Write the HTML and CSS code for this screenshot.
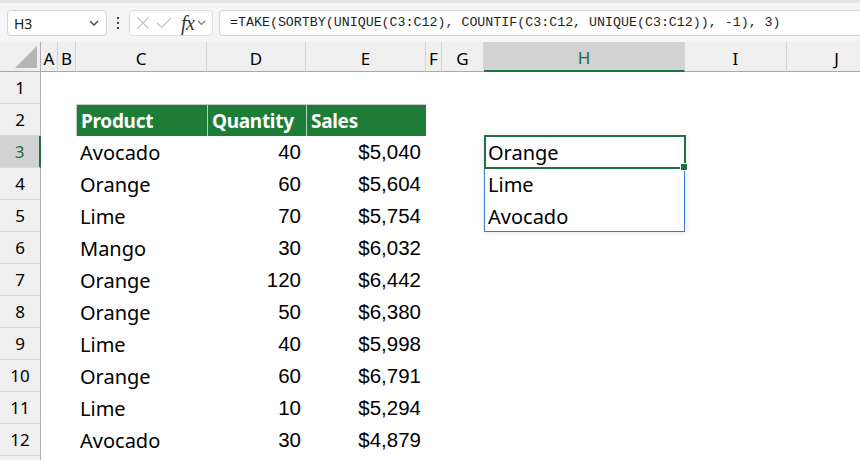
FILE: index.html
```html
<!DOCTYPE html>
<html>
<head>
<meta charset="utf-8">
<link rel="stylesheet" href="styles.css">
</head>
<body>
<div class="toolbar">
  <div class="namebox"><span>H3</span>
    <svg class="chev" width="10" height="6" viewBox="0 0 10 6"><path d="M1 1 L5 5 L9 1" fill="none" stroke="#444" stroke-width="1.3"/></svg>
  </div>
  <div class="dots"><i></i><i></i><i></i></div>
  <div class="fxbox">
    <svg width="14" height="14" viewBox="0 0 14 14"><path d="M1 1 L13 13 M13 1 L1 13" stroke="#c4c4c4" stroke-width="1.2" fill="none"/></svg>
    <svg width="16" height="12" viewBox="0 0 16 12"><path d="M1 6 L5.5 10.5 L15 1" stroke="#c4c4c4" stroke-width="1.2" fill="none"/></svg>
    <span class="fx">fx</span>
    <svg width="9" height="6" viewBox="0 0 9 6"><path d="M1 1 L4.5 4.5 L8 1" fill="none" stroke="#777" stroke-width="1.1"/></svg>
  </div>
  <div class="formula">=TAKE(SORTBY(UNIQUE(C3:C12), COUNTIF(C3:C12, UNIQUE(C3:C12)), -1), 3)</div>
</div>

<div class="sheet">
  <div class="ch corner"><svg width="22" height="22" viewBox="0 0 22 22"><path d="M22 0 L22 22 L0 22 Z" fill="#b5b5b5"/></svg></div>
  <div class="ch">A</div><div class="ch">B</div><div class="ch">C</div><div class="ch">D</div><div class="ch">E</div><div class="ch">F</div><div class="ch">G</div><div class="ch sel">H</div><div class="ch">I</div><div class="ch">J</div>

  <div class="rh">1</div><div></div><div></div><div></div><div></div><div></div><div></div><div></div><div></div><div></div><div></div>

  <div class="rh">2</div><div></div><div></div><div class="th first">Product</div><div class="th">Quantity</div><div class="th">Sales</div><div></div><div></div><div></div><div></div><div></div>

  <div class="rh rsel">3</div><div></div><div></div><div class="c">Avocado</div><div class="n">40</div><div class="n">$5,040</div><div></div><div></div><div class="c">Orange</div><div></div><div></div>
  <div class="rh">4</div><div></div><div></div><div class="c">Orange</div><div class="n">60</div><div class="n">$5,604</div><div></div><div></div><div class="c">Lime</div><div></div><div></div>
  <div class="rh">5</div><div></div><div></div><div class="c">Lime</div><div class="n">70</div><div class="n">$5,754</div><div></div><div></div><div class="c">Avocado</div><div></div><div></div>
  <div class="rh">6</div><div></div><div></div><div class="c">Mango</div><div class="n">30</div><div class="n">$6,032</div><div></div><div></div><div></div><div></div><div></div>
  <div class="rh">7</div><div></div><div></div><div class="c">Orange</div><div class="n">120</div><div class="n">$6,442</div><div></div><div></div><div></div><div></div><div></div>
  <div class="rh">8</div><div></div><div></div><div class="c">Orange</div><div class="n">50</div><div class="n">$6,380</div><div></div><div></div><div></div><div></div><div></div>
  <div class="rh">9</div><div></div><div></div><div class="c">Lime</div><div class="n">40</div><div class="n">$5,998</div><div></div><div></div><div></div><div></div><div></div>
  <div class="rh">10</div><div></div><div></div><div class="c">Orange</div><div class="n">60</div><div class="n">$6,791</div><div></div><div></div><div></div><div></div><div></div>
  <div class="rh">11</div><div></div><div></div><div class="c">Lime</div><div class="n">10</div><div class="n">$5,294</div><div></div><div></div><div></div><div></div><div></div>
  <div class="rh">12</div><div></div><div></div><div class="c">Avocado</div><div class="n">30</div><div class="n">$4,879</div><div></div><div></div><div></div><div></div><div></div>
  <div class="rh"></div>

  <div class="spill"></div>
  <div class="active"><span class="handle"></span></div>
</div>
</body>
</html>
```

FILE: styles.css
```css
html, body {
  margin: 0;
  padding: 0;
  width: 860px;
  height: 460px;
  overflow: hidden;
  background: #fff;
  font-family: "Noto Sans", "Liberation Sans", sans-serif;
}

.toolbar {
  height: 42px;
  box-sizing: border-box;
  background: #f5f5f5;
  border-top: 3px solid #e4e4e4;
  display: flex;
  align-items: center;
  padding-left: 7px;
  padding-top: 1px;
}

.namebox {
  width: 100px;
  height: 26px;
  box-sizing: border-box;
  background: #fff;
  border: 1px solid #d4d4d4;
  border-radius: 4px;
  display: flex;
  align-items: center;
  justify-content: space-between;
  padding: 0 7px 0 6px;
  font-size: 14px;
  color: #222;
}

.dots {
  width: 22px;
  display: flex;
  flex-direction: column;
  align-items: center;
  gap: 3px;
}
.dots i {
  width: 2px;
  height: 2px;
  background: #444;
  display: block;
}

.fxbox {
  width: 84px;
  height: 26px;
  box-sizing: border-box;
  background: #fff;
  border: 1px solid #dcdcdc;
  border-radius: 4px;
  display: flex;
  align-items: center;
  padding: 0 4px 0 6px;
  gap: 6px;
}
.fx {
  font-family: "Liberation Serif", serif;
  font-style: italic;
  font-size: 20px;
  color: #333;
  margin-left: 3px;
  margin-right: -3px;
  line-height: 1;
  letter-spacing: -0.5px;
}

.formula {
  margin-left: 6px;
  flex: 1;
  height: 26px;
  box-sizing: border-box;
  background: #fff;
  border: 1px solid #d4d4d4;
  border-right: none;
  border-radius: 4px 0 0 4px;
  padding-left: 10px;
  font-family: "Liberation Mono", monospace;
  font-size: 13.3px;
  line-height: 24px;
  color: #1f1f1f;
  white-space: nowrap;
}

.sheet {
  position: relative;
  display: grid;
  grid-template-columns: 41px 17px 18px 131px 99px 120px 16px 42px 201px 102px 100px;
  grid-template-rows: 30px repeat(13, 32px);
  color: #000;
}

.ch {
  background: #efefef;
  border-right: 1px solid #d4d4d4;
  border-bottom: 1px solid #a8a8a8;
  box-sizing: border-box;
  display: flex;
  align-items: center;
  justify-content: center;
  font-size: 17px;
  padding-top: 3px;
}
.ch.corner {
  justify-content: flex-end;
  align-items: flex-end;
  padding: 0 3px 3px 0;
  border-right: 1px solid #b0b0b0;
}
.ch.sel {
  background: #d2d2d2;
  color: #1c6b3e;
  border-bottom: 2px solid #1e7145;
}

.rh {
  grid-column: 1;
  background: #efefef;
  border-right: 1px solid #b0b0b0;
  border-bottom: 1px solid #d8d8d8;
  box-sizing: border-box;
  display: flex;
  align-items: center;
  justify-content: center;
  font-size: 17px;
}
.rh.rsel {
  background: #d2d2d2;
  color: #1c6b3e;
  border-right: 2px solid #1e7145;
}

.th {
  background: #1d7d36;
  color: #fff;
  font-weight: bold;
  font-size: 19px;
  letter-spacing: -0.3px;
  display: flex;
  align-items: center;
  padding-left: 4px;
  border-top: 1px solid #c8c8c8;
  border-left: 1px solid #b9cfbf;
  box-sizing: border-box;
}
.th.first {
  border-left: 1px solid #c8c8c8;
}

.c, .n {
  display: flex;
  align-items: center;
  font-size: 20px;
  white-space: nowrap;
}
.c {
  padding-left: 4px;
}
.n {
  justify-content: flex-end;
  padding-right: 5px;
  font-family: "Liberation Sans", sans-serif;
  font-size: 20.5px;
}

.spill {
  position: absolute;
  left: 484px;
  top: 94px;
  width: 201px;
  height: 96px;
  box-sizing: border-box;
  border: 1px solid #3a78d4;
  box-shadow: 0 0 6px rgba(0, 0, 0, 0.12);
  pointer-events: none;
}
.active {
  position: absolute;
  left: 484px;
  top: 93px;
  width: 202px;
  height: 34px;
  box-sizing: border-box;
  border: 2px solid #1e7145;
  pointer-events: none;
}
.handle {
  position: absolute;
  right: -4px;
  bottom: -4px;
  width: 6px;
  height: 6px;
  background: #1e7145;
  border: 1px solid #fff;
}
```
